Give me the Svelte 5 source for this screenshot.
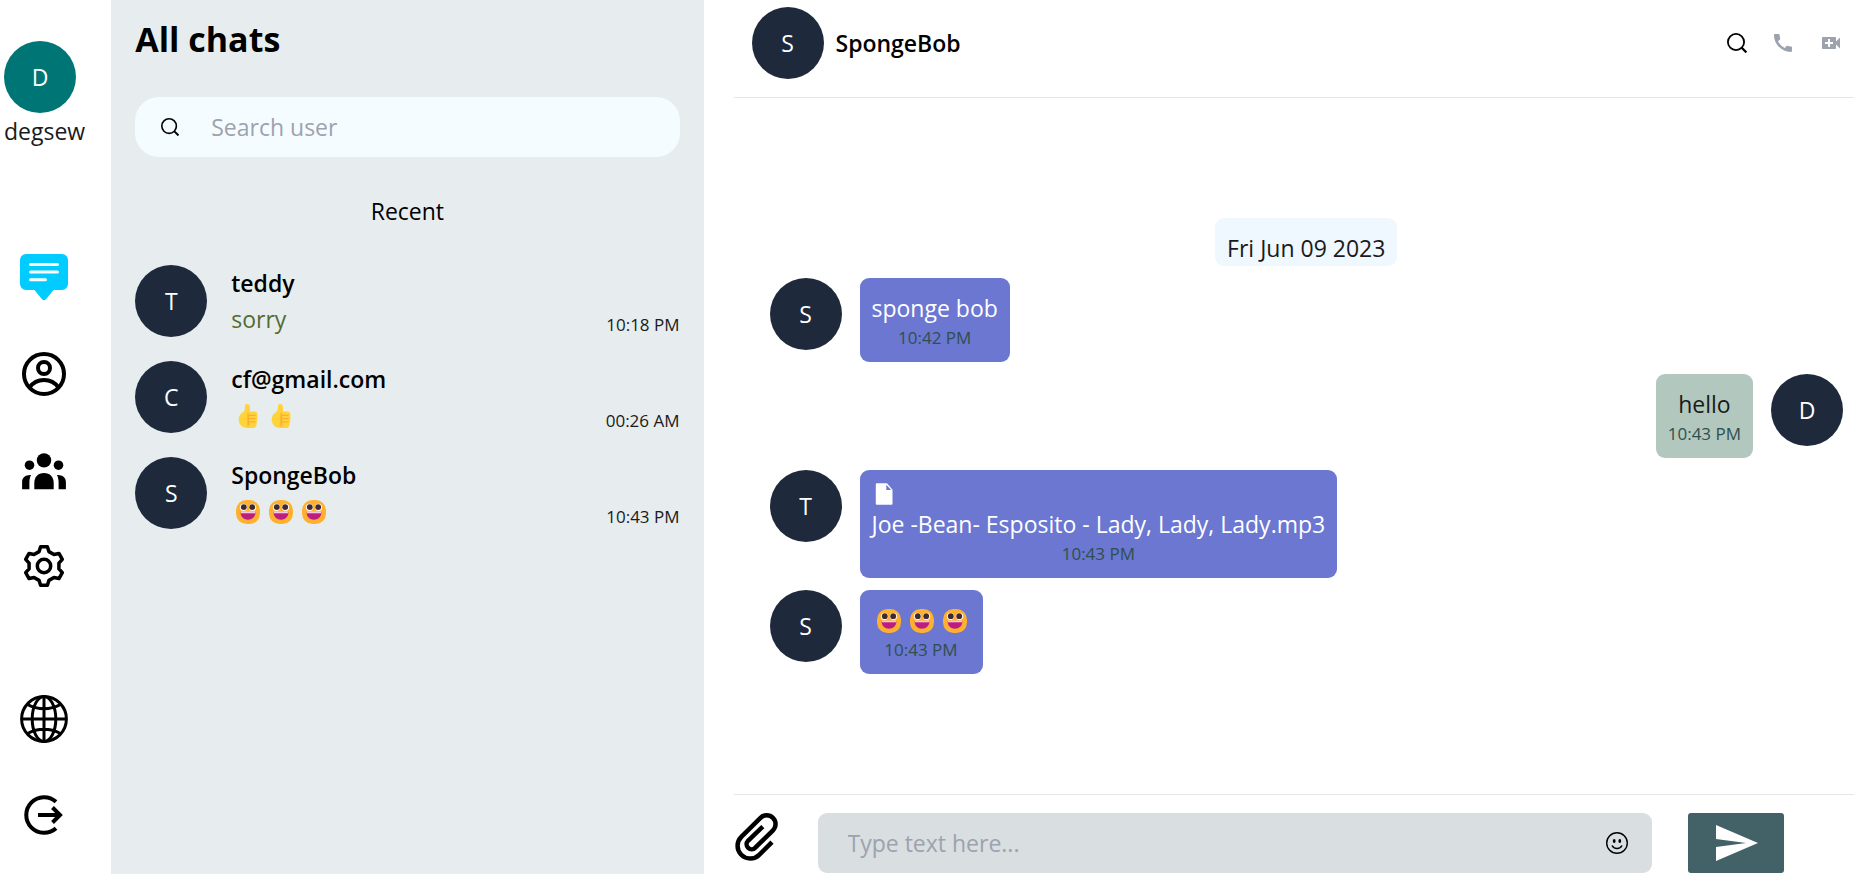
<script>
  const chats = [
    { initial: 'T', name: 'teddy', text: 'sorry', time: '10:18 PM' },
    { initial: 'C', name: 'cf@gmail.com', emoji: 'thumb', count: 2, time: '00:26 AM' },
    { initial: 'S', name: 'SpongeBob', emoji: 'grin', count: 3, time: '10:43 PM' }
  ];

  const messages = [
    { initial: 'S', text: 'sponge bob', time: '10:42 PM' },
    { initial: 'D', text: 'hello', time: '10:43 PM', own: true },
    { initial: 'T', text: 'Joe -Bean- Esposito - Lady, Lady, Lady.mp3', time: '10:43 PM', file: true },
    { initial: 'S', emoji: 'grin', count: 3, time: '10:43 PM' }
  ];

  let search = $state('');
  let draft = $state('');

  // Six-toothed gear outline centred on (24, 24)
  const polar = (r, deg) => {
    const a = ((deg - 90) * Math.PI) / 180;
    return `${(24 + r * Math.cos(a)).toFixed(2)} ${(24 + r * Math.sin(a)).toFixed(2)}`;
  };
  const gear =
    'M' +
    [0, 60, 120, 180, 240, 300]
      .flatMap((d) => [polar(15.2, d - 19), polar(19.5, d - 10), polar(19.5, d + 10), polar(15.2, d + 19)])
      .join('L') +
    'Z';
</script>

{#snippet emojis(kind, count)}
  <span class="emojis" role="img" aria-label={kind}>
    {#each Array(count) as _}
      <svg viewBox="0 0 24 24" width="24" height="24">
        {#if kind === 'grin'}
          <rect x="0" y="0" width="24" height="24" rx="10.5" fill="#ffb02e" />
          <circle cx="7.500" cy="7.300" r="3.600" fill="#fff" />
          <circle cx="16.500" cy="7.300" r="3.600" fill="#fff" />
          <circle cx="7.800" cy="7.200" r="2.900" fill="#402a32" />
          <circle cx="16.200" cy="7.200" r="2.900" fill="#402a32" />
          <path d="M4.6 12.6h14.8c0 4.200-3.100 7.200-7.400 7.200s-7.400-3-7.400-7.200z" fill="#bb1d80" />
          <path d="M5 11.600h14v1.700H5z" fill="#f6c9dc" />
        {:else}
          <path d="M9 1.800C9 .7 9.800 0 11 0c2 0 3 1.300 3 3.400V7.500h5c1.500 0 2.200 1 2 2.300.7.700.8 2 .2 2.900.6 1 .5 2.200-.2 3 .5 1 .3 2-.4 2.800.4 1.500 0 2.900-.6 4.100-.3.900-1 1.400-2 1.400h-6.500C6.500 24 2.700 20.800 2.700 15.500c0-3.400 1.700-5.900 4.600-7.400C8.700 6.800 9 4.500 9 1.800z" fill="#ffd43b" />
          <path d="M12 8.500v14.200M13 10.800q-1.500 2 0 3.400-1.500 1.600 0 3.400-1.200 1.500.3 3M13 11.300h6.500M13 14.600h6.500M13 17.900h6.500" fill="none" stroke="#ffa62b" stroke-width="1" />
        {/if}
      </svg>
    {/each}
  </span>
{/snippet}

{#snippet magnifier(size)}
  <svg viewBox="0 0 20 20" width={size} height={size} fill="none" stroke="#000" stroke-width="1.8">
    <circle cx="9" cy="9" r="8.100" />
    <path d="M14.600 14.600l4.800 4.800" stroke-width="2.200" />
  </svg>
{/snippet}

<div class="app">
  <nav class="rail" aria-label="Main">
    <div class="me">
      <span class="avatar teal">D</span>
      <span>degsew</span>
    </div>
    <button aria-label="Chats">
      <svg viewBox="0 0 48 48" width="48" height="48">
        <path d="M6 0H42a6 6 0 0 1 6 6V30a6 6 0 0 1-6 6H33.500L26 45.200q-2 1.800-4 0L14.500 36H6a6 6 0 0 1-6-6V6a6 6 0 0 1 6-6z" fill="#0cf" />
        <path d="M10.500 10.500h27M10.500 18.100h27M10.500 25.700h15" stroke="#fff" stroke-width="3" stroke-linecap="round" />
      </svg>
    </button>
    <button aria-label="Profile">
      <svg viewBox="0 0 48 48" width="48" height="48" fill="none" stroke="#000" stroke-width="4">
        <circle cx="24" cy="24" r="20" />
        <circle cx="24" cy="18" r="6" />
        <path d="M9.500 37.500C13 32.500 18 30 24 30s11 2.500 14.500 7.500" />
      </svg>
    </button>
    <button aria-label="Groups">
      <svg viewBox="0 0 48 48" width="48" height="48">
        <circle cx="24" cy="14.400" r="7.200" />
        <circle cx="9.500" cy="19.200" r="4.800" />
        <circle cx="38.500" cy="19.200" r="4.800" />
        <path d="M14.300 43.300V37c0-6 3.700-10 9.700-10s9.700 4 9.700 10v6.300z" />
        <path d="M2.100 43.300V36c0-4.500 3.400-7.300 9-7-1.200 2-1.700 4.600-1.700 7.500v6.800zM45.900 43.300V36c0-4.500-3.400-7.300-9-7 1.200 2 1.700 4.600 1.700 7.500v6.800z" />
      </svg>
    </button>
    <button aria-label="Settings">
      <svg viewBox="0 0 48 48" width="48" height="48" fill="none" stroke="#000" stroke-width="3.500" stroke-linejoin="round">
        <path d={gear} />
        <circle cx="24" cy="24" r="6.700" />
      </svg>
    </button>
    <button class="lower" aria-label="Language">
      <svg viewBox="0 0 48 48" width="48" height="48" fill="none" stroke="#000" stroke-width="3">
        <circle cx="24" cy="24" r="22.400" />
        <ellipse cx="24" cy="24" rx="11.800" ry="22.400" />
        <path d="M24 1.500v45M1.500 24h45M7.500 9.500C13 12.500 18 13.800 24 13.800s11-1.300 16.500-4.300M7.500 38.500c5.500-3 10.500-4.300 16.500-4.300s11 1.300 16.500 4.300" />
      </svg>
    </button>
    <button aria-label="Log out">
      <svg viewBox="0 0 48 48" width="48" height="48" fill="none" stroke="#000" stroke-width="4">
        <path d="M36 10.800A17.800 17.800 0 1 0 36 37.200" />
        <path d="M18 24h22M32.500 16.500l7.500 7.500-7.500 7.500" />
      </svg>
    </button>
  </nav>

  <aside class="sidebar">
    <h1>All chats</h1>
    <label class="search">
      {@render magnifier(18)}
      <input type="search" placeholder="Search user" aria-label="Search user" bind:value={search} />
    </label>
    <h2>Recent</h2>
    <ul>
      {#each chats as chat}
        <li>
          <span class="avatar">{chat.initial}</span>
          <div class="summary">
            <strong>{chat.name}</strong>
            {#if chat.emoji}
              {@render emojis(chat.emoji, chat.count)}
            {:else}
              <span class="preview">{chat.text}</span>
            {/if}
          </div>
          <time>{chat.time}</time>
        </li>
      {/each}
    </ul>
  </aside>

  <main>
    <header>
      <span class="avatar">S</span>
      <strong>SpongeBob</strong>
      <div class="actions">
        <button aria-label="Search messages">{@render magnifier(20)}</button>
        <button aria-label="Call">
          <svg viewBox="0 0 24 24" width="24" height="24" fill="#9ca3af">
            <path d="M20.010 15.380c-1.230 0-2.420-.2-3.530-.56-.35-.12-.74-.03-1.010.24l-1.570 1.970c-2.830-1.350-5.480-3.900-6.890-6.830l1.950-1.660c.27-.28.35-.67.24-1.020-.37-1.110-.56-2.300-.56-3.530 0-.54-.45-.99-.99-.99H4.190C3.650 3 3 3.240 3 3.990 3 13.280 10.730 21 20.010 21c.71 0 .99-.63.99-1.180v-3.450c0-.54-.45-.99-.99-.99z" />
          </svg>
        </button>
        <button aria-label="Video call">
          <svg viewBox="0 0 24 24" width="24" height="24" fill="#9ca3af">
            <path d="M17 10.500V7c0-.55-.45-1-1-1H4c-.55 0-1 .45-1 1v10c0 .55.45 1 1 1h12c.55 0 1-.45 1-1v-3.500l4 4v-11l-4 4zM14 13h-3v3H9v-3H6v-2h3V8h2v3h3v2z" />
          </svg>
        </button>
      </div>
    </header>

    <section class="messages" aria-label="Messages">
      <p class="date">Fri Jun 09 2023</p>
      {#each messages as message}
        <article class:own={message.own}>
          <span class="avatar">{message.initial}</span>
          <div class="bubble">
            {#if message.file}
              <svg class="file" viewBox="0 0 24 24" width="24" height="24" fill="#fff">
                <path fill-rule="evenodd" d="M4.800 1.200H15l5.500 6.500V21.800q0 1-1 1H4.800q-1 0-1-1V2.200q0-1 1-1zM14.300 2.800V8h4.800z" />
              </svg>
            {/if}
            {#if message.emoji}
              {@render emojis(message.emoji, message.count)}
            {:else}
              <span>{message.text}</span>
            {/if}
            <time>{message.time}</time>
          </div>
        </article>
      {/each}
    </section>

    <form onsubmit={(e) => e.preventDefault()}>
      <button type="button" aria-label="Attach file">
        <svg viewBox="0 0 48 48" width="48" height="48" fill="none" stroke="#000" stroke-width="4.500">
          <path d="M38 29.200L25.200 41.800A12.500 12.500 0 0 1 7.300 23.800L26.500 4.900A8.800 8.800 0 0 1 39 17.300L21.300 34.700A5 5 0 0 1 14 27.800L28.800 13.600" />
        </svg>
      </button>
      <div class="field">
        <input type="text" placeholder="Type text here..." aria-label="Message" bind:value={draft} />
        <button type="button" aria-label="Insert emoji">
          <svg viewBox="0 0 24 24" width="24" height="24" fill="none" stroke="#000" stroke-width="1.400">
            <circle cx="12" cy="12" r="10.300" />
            <path d="M7 14.500c1 2 2.800 3 5 3s4-1 5-3" stroke-width="1.600" />
            <ellipse cx="9.200" cy="10" rx="1.400" ry="2" fill="#000" stroke="none" />
            <ellipse cx="14.800" cy="10" rx="1.400" ry="2" fill="#000" stroke="none" />
          </svg>
        </button>
      </div>
      <button class="send" aria-label="Send">
        <svg viewBox="0 0 24 24" width="48" height="48" fill="#fff"><path d="M2.010 21L23 12 2.010 3 2 10l15 2-15 2z" /></svg>
      </button>
    </form>
  </main>
</div>

<style>
  :global(body) {
    margin: 0;
    background: #fff;
  }

  .app,
  .app * {
    box-sizing: border-box;
  }

  .app {
    display: grid;
    grid-template-columns: 6% calc(32% - 1px) 1fr;
    min-height: 100vh;
    font: 400 23px/36px 'Segoe UI', 'Open Sans', 'Noto Sans', sans-serif;
    color: #000;
  }

  svg {
    display: block;
    flex: none;
  }

  button {
    display: block;
    padding: 0;
    border: 0;
    background: none;
    cursor: pointer;
  }

  input {
    flex: 1;
    min-width: 0;
    padding: 0;
    border: 0;
    outline: 0;
    background: none;
    font: inherit;
    color: inherit;
  }

  input::placeholder {
    color: #9ca3af;
    opacity: 1;
  }

  strong {
    font-weight: 600;
  }

  time {
    font-size: 17px;
    line-height: 24px;
    color: #1a1a1a;
  }

  .avatar {
    display: grid;
    place-items: center;
    flex: none;
    width: 72px;
    height: 72px;
    border-radius: 50%;
    background: #1e293b;
    color: #fff;
  }

  .teal {
    background: #007575;
  }

  .emojis {
    display: flex;
    align-items: center;
    gap: 9px;
    height: 36px;
    padding: 2px 4px 0 5px;
  }

  .rail {
    display: flex;
    flex-direction: column;
    align-items: flex-start;
    gap: 48px;
    padding: 41px 0 35px 20px;
  }

  .me {
    margin: 0 0 57px -16px;
    color: #1a1a1a;
  }

  .lower {
    margin-top: auto;
  }

  .sidebar {
    padding: 12px 24px;
    background: #e7edef;
  }

  h1 {
    margin: 0;
    font-size: 34px;
    font-weight: 700;
    line-height: 55px;
  }

  .search {
    display: flex;
    align-items: center;
    gap: 32px;
    height: 60px;
    margin-top: 30px;
    padding: 0 26px;
    border-radius: 24px;
    background: #f5fcff;
  }

  h2 {
    margin: 36px 0;
    font-size: 23px;
    font-weight: 500;
    text-align: center;
  }

  ul {
    display: grid;
    gap: 24px;
    margin: 0;
    padding: 0;
    list-style: none;
  }

  li {
    display: flex;
    align-items: flex-end;
  }

  .summary {
    display: flex;
    flex-direction: column;
    flex: 1;
    padding-left: 24px;
  }

  .preview {
    color: #556b2f;
  }

  main {
    display: flex;
    flex-direction: column;
    min-width: 0;
    margin-left: 30px;
  }

  header {
    display: flex;
    align-items: center;
    gap: 12px;
    padding: 7px 11px 18px 18px;
    border-bottom: 1px solid #e5e7eb;
  }

  .actions {
    display: flex;
    align-items: center;
    gap: 24px;
    margin-left: auto;
  }

  .messages {
    display: flex;
    flex-direction: column;
    flex: 1;
    gap: 12px;
    padding: 120px 11px 24px 36px;
  }

  .date {
    align-self: center;
    margin: 0;
    padding: 12px 12px 0;
    border-radius: 9px;
    background: #eff7ff;
    color: #1a1a1a;
  }

  article {
    display: flex;
    align-items: flex-start;
    gap: 18px;
  }

  .own {
    flex-direction: row-reverse;
  }

  .bubble {
    display: flex;
    flex-direction: column;
    align-items: center;
    padding: 12px;
    border-radius: 9px;
    background: #6b77d1;
    color: #fff;
  }

  .own .bubble {
    background: #b2c8be;
    color: #1a1a1a;
  }

  .bubble time {
    color: #2f4f4f;
  }

  .file {
    align-self: flex-start;
  }

  form {
    display: flex;
    align-items: flex-start;
    gap: 36px;
    padding: 18px 70px 0 0;
    border-top: 1px solid #e5e7eb;
    margin-bottom: 1px;
  }

  .field {
    display: flex;
    align-items: center;
    flex: 1;
    height: 60px;
    padding: 0 23px 0 30px;
    border-radius: 9px;
    background: #d9dee1;
  }

  .send {
    padding: 6px 24px;
    border-radius: 3px;
    background: #426268;
  }
</style>
